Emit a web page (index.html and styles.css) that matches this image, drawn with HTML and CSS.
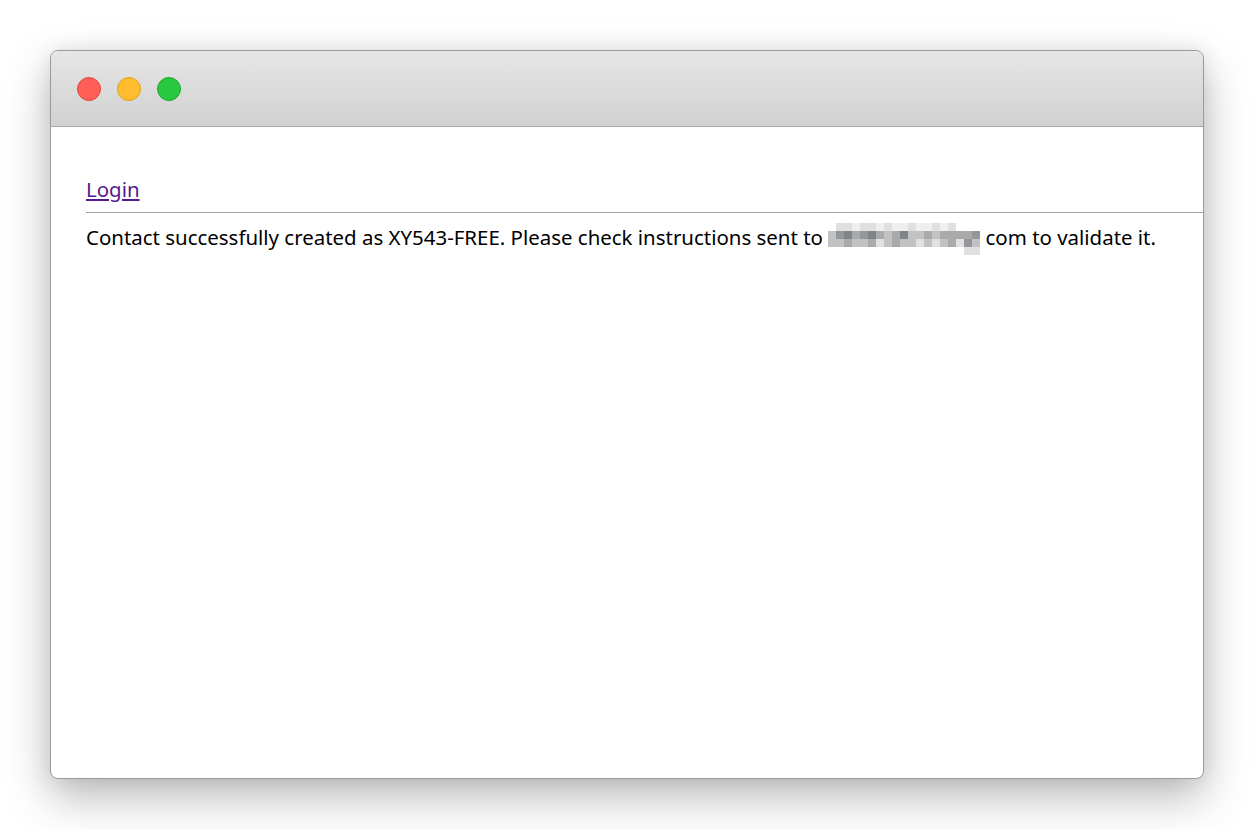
FILE: index.html
```html
<!DOCTYPE html>
<html>
<head>
<meta charset="utf-8">
<link rel="stylesheet" href="styles.css">
</head>
<body>
<div class="window">
  <div class="titlebar">
    <span class="dot red"></span>
    <span class="dot yellow"></span>
    <span class="dot green"></span>
  </div>
  <div class="content">
    <div class="nav"><a href="#" class="login">Login</a></div>
    <hr class="rule">
    <p class="msg">Contact successfully created as XY543-FREE. Please check instructions sent to <span class="blur"><i class="w"></i><i class="l2"></i><i class="l2"></i><i class="l1"></i><i class="l2"></i><i class="l2"></i><i class="l1"></i><i class="l2"></i><i class="l1"></i><i class="l1"></i><i class="l2"></i><i class="l1"></i><i class="l1"></i><i class="l2"></i><i class="l1"></i><i class="l2"></i><i class="w"></i><i class="w"></i><i class="w"></i><i class="m1"></i><i class="d1"></i><i class="d2"></i><i class="m2"></i><i class="d1"></i><i class="d2"></i><i class="m2"></i><i class="m1"></i><i class="m2"></i><i class="d2"></i><i class="m1"></i><i class="m1"></i><i class="m2"></i><i class="m1"></i><i class="m2"></i><i class="m2"></i><i class="m2"></i><i class="m2"></i><i class="d1"></i><i class="m1"></i><i class="m1"></i><i class="m2"></i><i class="m1"></i><i class="m1"></i><i class="m2"></i><i class="l2"></i><i class="m1"></i><i class="m2"></i><i class="m1"></i><i class="m1"></i><i class="l2"></i><i class="m1"></i><i class="l2"></i><i class="m1"></i><i class="m2"></i><i class="l2"></i><i class="d1"></i><i class="m1"></i><i class="w"></i><i class="w"></i><i class="w"></i><i class="w"></i><i class="w"></i><i class="w"></i><i class="w"></i><i class="w"></i><i class="w"></i><i class="w"></i><i class="w"></i><i class="w"></i><i class="w"></i><i class="w"></i><i class="w"></i><i class="w"></i><i class="w"></i><i class="l2"></i><i class="l2"></i></span> com to validate it.</p>
  </div>
</div>
</body>
</html>
```
FILE: styles.css
```css
html, body {
  margin: 0;
  padding: 0;
  background: #ffffff;
}
body {
  font-family: "Noto Sans", "Open Sans", sans-serif;
  padding: 50px 0 51px 50px;
  min-height: 830px;
  box-sizing: border-box;
}
.window {
  width: 1152px;
  height: 727px;
  border: 1px solid #9a9a9a;
  border-radius: 8px;
  overflow: hidden;
  background: #fff;
  box-shadow: 0 18px 45px rgba(0,0,0,0.28), 0 0 20px rgba(0,0,0,0.08);
}
.titlebar {
  height: 75px;
  border-bottom: 1px solid #a8a8a8;
  background: linear-gradient(#e6e6e6, #d1d1d1);
  display: flex;
  align-items: center;
  gap: 16px;
  padding-left: 26px;
}
.dot {
  width: 22px;
  height: 22px;
  border-radius: 50%;
  display: block;
}
.red { background: #ff5f57; border: 1px solid #e2463f; }
.yellow { background: #febc2e; border: 1px solid #e1a116; }
.green { background: #28c840; border: 1px solid #1aab29; }
.content {
  padding: 49px 0 0 35px;
  font-size: 20.45px;
  color: #000;
}
.nav {
  line-height: 26px;
}
.login {
  color: #551a8b;
  text-decoration: underline;
}
.rule {
  margin: 10px 0 0 0;
  border: 0;
  border-top: 1px solid #a0a0a0;
  height: 0;
}
.msg {
  margin: 9px 0 0 0;
  line-height: 30px;
}
.blur {
  display: inline-grid;
  grid-template-columns: repeat(19, 8px);
  grid-template-rows: repeat(4, 8px);
  vertical-align: middle;
  margin: -10px 0;
  width: 152px;
  transform: translateY(-1px);
}
.blur i { display: block; }
.blur .w { background: transparent; }
.blur .l1 { background: #efefef; }
.blur .l2 { background: #e0e0e0; }
.blur .m1 { background: #c2c2c2; }
.blur .m2 { background: #aaaaaa; }
.blur .d1 { background: #93979b; }
.blur .d2 { background: #80858a; }
```
